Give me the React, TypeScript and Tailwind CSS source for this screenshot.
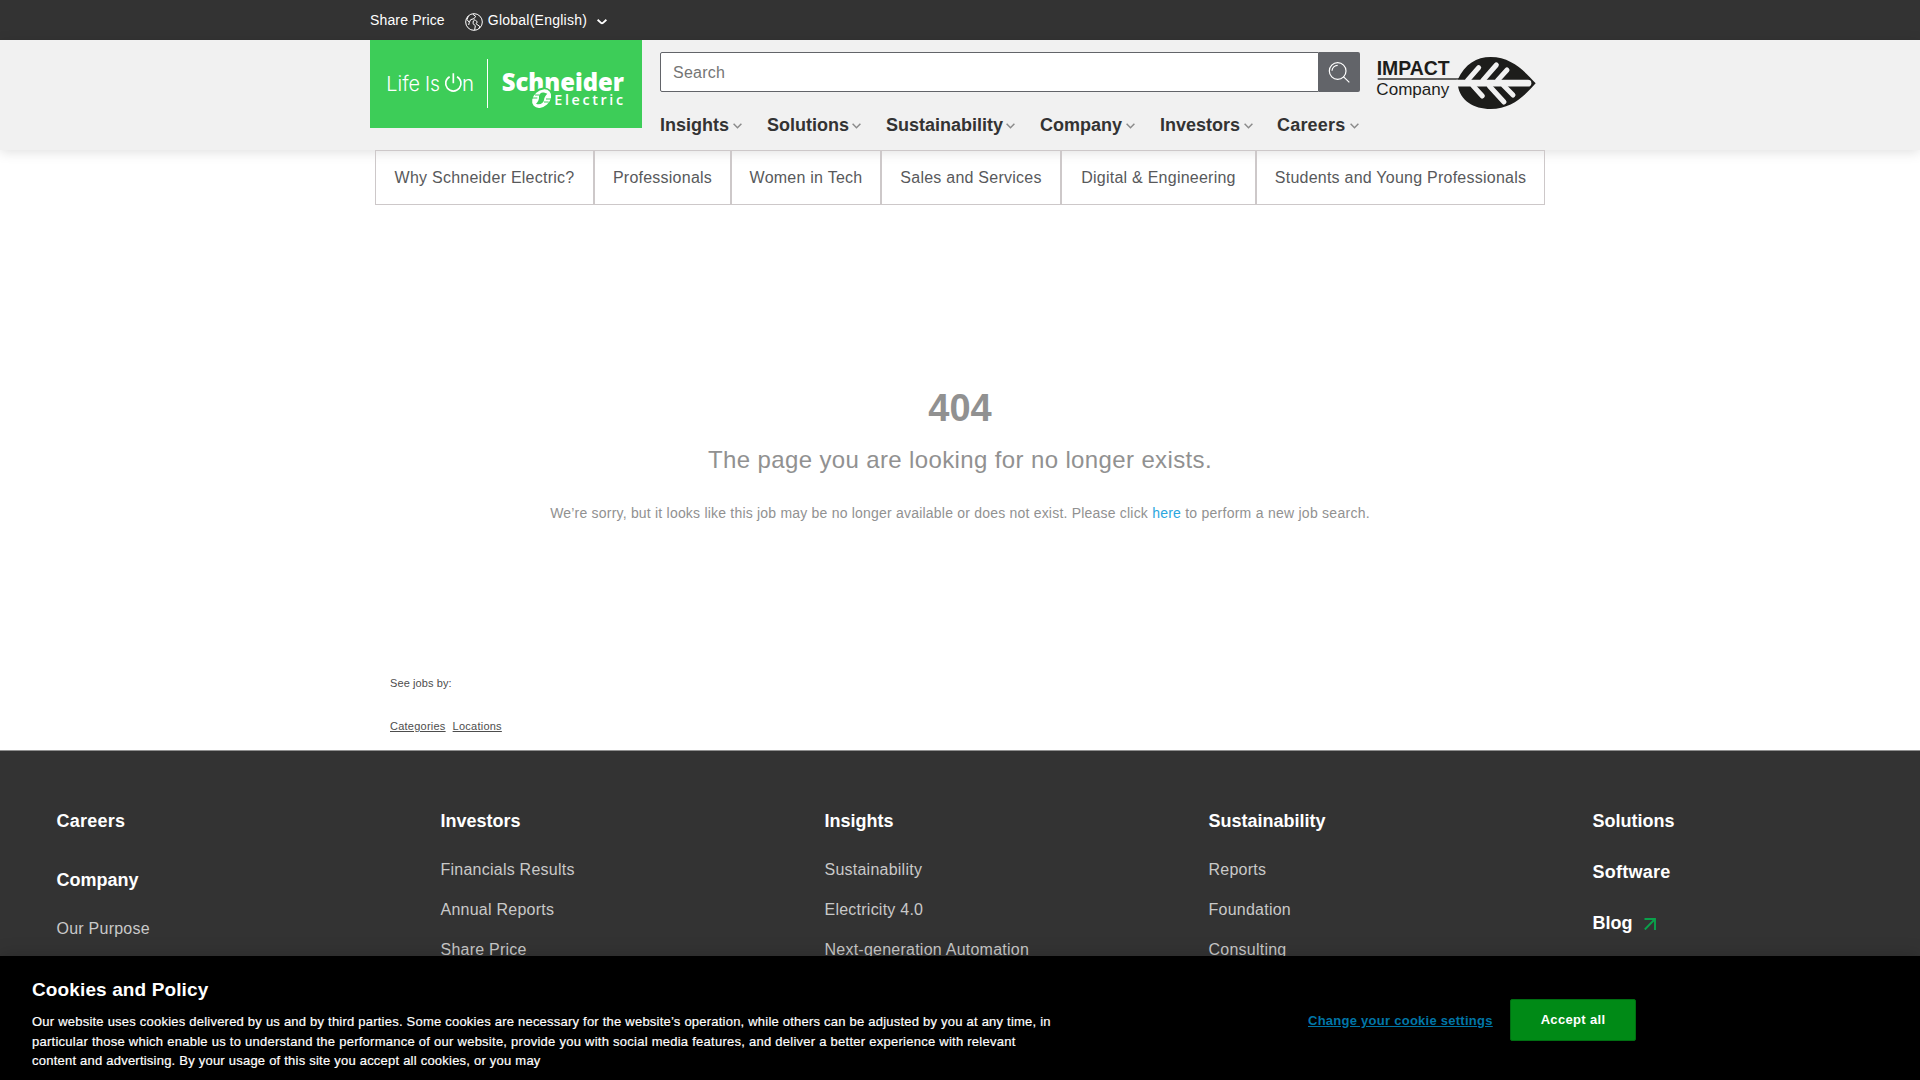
const mainNav = [
  { label: 'Insights', box: 'w-[107px]', gap: 'ml-[4px]' },
  { label: 'Solutions', box: 'w-[119px]', gap: 'ml-[3px]' },
  { label: 'Sustainability', box: 'w-[154px]', gap: 'ml-[3px]' },
  { label: 'Company', box: 'w-[120px]', gap: 'ml-[4px]' },
  { label: 'Investors', box: 'w-[117px]', gap: 'ml-[4px]' },
  { label: 'Careers', box: 'w-[90px] tracking-[0.2px]', gap: 'ml-[5px]' },
];

const subNav = [
  { label: 'Why Schneider Electric?', box: 'w-[219px]' },
  { label: 'Professionals', box: 'w-[137px]' },
  { label: 'Women in Tech', box: 'w-[150px]' },
  { label: 'Sales and Services', box: 'w-[180px]' },
  { label: 'Digital & Engineering', box: 'w-[195px]' },
  { label: 'Students and Young Professionals', box: 'w-[289px]' },
];

const footerColumns = [
  { title: 'Investors', links: ['Financials Results', 'Annual Reports', 'Share Price'] },
  { title: 'Insights', links: ['Sustainability', 'Electricity 4.0', 'Next-generation Automation'] },
  { title: 'Sustainability', links: ['Reports', 'Foundation', 'Consulting'] },
];

function Globe() {
  return (
    <svg viewBox="0 0 54 54" className="h-[18px] w-[18px]" fill="none" stroke="#fff" strokeWidth="3" strokeLinejoin="round">
      <circle cx="27" cy="27" r="25" />
      <path d="M10 9 L6 20 L13 28 L17 20 L27 17 L32 10 L24 4 M25 24 L30 20 L37 27 L33 32 L45 41 L41 47 M25 24 L24 32 L31 38 L29 51 M13 28 L11 36" />
    </svg>
  );
}

function Logo() {
  return (
    <svg viewBox="30 120 816 264" className="h-[88px] w-[272px] shrink-0 bg-[#3dcd58] tracking-normal" fill="#fff">
      <g fontFamily="Inter" fontWeight="300" fontSize="61">
        <text x="79" y="272" textLength="101" lengthAdjust="spacingAndGlyphs">Life</text>
        <text x="195" y="272" textLength="45" lengthAdjust="spacingAndGlyphs">Is</text>
        <text x="306" y="272" textLength="36" lengthAdjust="spacingAndGlyphs">n</text>
      </g>
      <path d="M269 230 A23 23 0 1 0 291 230 M280 220 V250" fill="none" stroke="#fff" strokeWidth="5" />
      <rect x="381" y="177" width="3" height="147" />
      <text x="425" y="272" fontFamily="Open Sans" fontWeight="800" fontSize="75" textLength="367" lengthAdjust="spacingAndGlyphs">Schneider</text>
      <text x="583" y="314" fontFamily="Open Sans" fontWeight="600" fontSize="43" textLength="206" lengthAdjust="spacing">Electric</text>
      <ellipse cx="545" cy="295" rx="36" ry="29" transform="rotate(-42 545 295)" fill="#3dcd58" />
      <ellipse cx="545" cy="296" rx="32" ry="24" transform="rotate(-42 545 296)" />
      <path d="M554 278 C544 275 537 281 537 289 C538 299 534 306 528 311 C539 316 551 310 552 300 C553 291 557 286 562 281 Z" fill="#3dcd58" />
      <path d="M514 294 H532 M525 285 H538 M552 306 H566 M558 297 H576" stroke="#3dcd58" strokeWidth="3.5" />
    </svg>
  );
}

function ImpactLogo() {
  return (
    <svg viewBox="0 0 540 195" className="h-[65px] w-[180px] shrink-0 tracking-normal" fill="#1d1d1b">
      <text x="20" y="74" fontFamily="Liberation Sans" fontWeight="700" fontSize="62" textLength="219" lengthAdjust="spacingAndGlyphs">IMPACT</text>
      <rect x="23" y="85" width="250" height="4" />
      <text x="19" y="136" fontFamily="Liberation Sans" fontSize="50" textLength="219" lengthAdjust="spacingAndGlyphs">Company</text>
      <path d="M263 89 C285 42 320 21 362 21 C425 21 465 65 497 100 C465 136 425 177 362 177 C310 177 270 150 264 108 Z" />
      <g stroke="#f1f1f1" strokeWidth="15" strokeLinecap="round" fill="none">
        <path d="M262 99.500 H474" strokeWidth="20" />
        <path d="M292 92 L326 53 M338 92 L379 45 M382 92 L411 60 M308 106 L337 138 M358 108 L402 156 M400 106 L429 135" />
      </g>
    </svg>
  );
}

function SearchIcon() {
  return (
    <svg viewBox="0 0 66 66" className="h-[22px] w-[22px]" fill="none" stroke="#fff" strokeWidth="3.6">
      <circle cx="29" cy="30" r="25" />
      <path d="M46 47 L64 64 M12 29 A17 17 0 0 1 29 13" />
    </svg>
  );
}

function Chevron() {
  return (
    <svg viewBox="0 0 9 6" className="h-[6px] w-[9px]" fill="none" stroke="#8b8b8b" strokeWidth="1.5">
      <path d="M0.600 0.800 L4.500 4.700 L8.400 0.800" />
    </svg>
  );
}

export default function App() {
  return (
    <div className="relative flex h-[1080px] w-[1920px] flex-col overflow-hidden bg-white font-['Liberation_Sans',sans-serif] tracking-[0.24px]">
      <div className="flex h-10 shrink-0 items-center bg-[#333] pl-[370px] text-sm text-white">
        <span className="tracking-[0.15px]">Share Price</span>
        <div className="ml-[20px] mt-[3px]"><Globe /></div>
        <span className="ml-[5px]">Global(English)</span>
        <svg viewBox="0 0 10 6" className="ml-[10px] mt-[3px] h-[6px] w-[10px]" fill="none" stroke="#fff" strokeWidth="1.9">
          <path d="M0.600 0.800 L4 3.900 Q5 4.800 6 3.900 L9.400 0.800" />
        </svg>
      </div>

      <header className="z-10 flex h-[110px] shrink-0 bg-[#f1f1f1] pl-[370px] shadow-[0_2px_12px_rgba(0,0,0,0.13)]">
        <Logo />
        <div className="ml-[18px] w-[700px] pt-[12px]">
          <div className="flex h-10 w-[700px]">
            <div className="flex flex-1 items-center rounded-l-[2px] border border-[#626469] bg-white pt-[1px] pl-[12px] text-base text-[#757575]">Search</div>
            <div className="flex w-[41px] items-center justify-center rounded-r-[2px] bg-[#626469] pr-[1px] pb-[1px]"><SearchIcon /></div>
          </div>
          <nav className="mt-[20px] flex text-[18px] leading-[26px] font-bold tracking-normal text-[#333]">
            {mainNav.map((n) => (
              <div key={n.label} className={`flex shrink-0 items-center whitespace-nowrap ${n.box}`}>
                {n.label}
                <span className={`mt-[2px] ${n.gap}`}><Chevron /></span>
              </div>
            ))}
          </nav>
        </div>
        <div className="ml-[10px] mt-[10px]"><ImpactLogo /></div>
      </header>

      <nav className="relative z-20 ml-[375px] flex h-[55px] w-[1170px] shrink-0 text-base text-[#58595b]">
        {subNav.map((n) => (
          <div key={n.label} className={`flex items-center justify-center border border-[#cdc8c9] pt-[1px] whitespace-nowrap ${n.box}`}>{n.label}</div>
        ))}
      </nav>

      <main className="flex h-[545px] shrink-0 flex-col items-center text-[#919191]">
        <h1 className="mt-[180px] text-[38px] leading-[46px] font-bold tracking-normal">404</h1>
        <p className="mt-[14px] text-2xl leading-[30px] tracking-[0.371px]">The page you are looking for no longer exists.</p>
        <p className="mt-[28px] text-sm leading-[20px] tracking-[0.207px]">
          We’re sorry, but it looks like this job may be no longer available or does not exist. Please click <a className="text-[#2ba6de]">here</a> <span className="tracking-[0.26px]">to perform a new job search.</span>
        </p>
        <div className="mt-[153px] w-full pl-[390px] text-[11px] leading-[14px] tracking-[0.1px] text-[#4d4d4d]">
          <p>See jobs by:</p>
          <div className="mt-[29px] flex gap-[7px] tracking-[0.24px]">
            <a className="underline">Categories</a>
            <a className="underline">Locations</a>
          </div>
        </div>
      </main>

      <footer className="grid h-[330px] shrink-0 grid-cols-[384px_384px_384px_384px_1fr] border-t border-[#8f8f8f] bg-[#333] pl-[56.5px] text-base text-[#c9c9c9]">
        <div>
          <h2 className="mt-[58px] text-[18px] leading-6 font-bold tracking-[0.25px] text-white">Careers</h2>
          <h2 className="mt-[35px] text-[18px] leading-6 font-bold tracking-normal text-white">Company</h2>
          <p className="mt-[25px] leading-6">Our Purpose</p>
        </div>
        {footerColumns.map((c) => (
          <div key={c.title}>
            <h2 className="mt-[58px] text-[18px] leading-6 font-bold tracking-normal text-white">{c.title}</h2>
            <div className="mt-[25px] flex flex-col gap-4 leading-6">
              {c.links.map((l) => <a key={l}>{l}</a>)}
            </div>
          </div>
        ))}
        <div className="mt-[58px] flex flex-col gap-[27px] text-[18px] leading-6 font-bold tracking-normal text-white">
          <span>Solutions</span>
          <span className="tracking-[0.25px]">Software</span>
          <span className="flex items-center">
            Blog
            <svg viewBox="0 0 12 12" className="mt-[1px] ml-[11px] h-[12px] w-[12px]" fill="none" stroke="#0aa14b" strokeWidth="1.9">
              <path d="M0.500 1 H11 V12 M11 1 L0.800 11.500" />
            </svg>
          </span>
        </div>
      </footer>

      <section className="absolute inset-x-0 bottom-0 z-30 flex h-[124px] bg-black text-white shadow-[0_0_18px_rgba(0,0,0,0.2)]">
        <div className="w-[1276px] pt-[22px] pl-[32px]">
          <h2 className="text-[19px] leading-6 font-bold tracking-[0.12px]">Cookies and Policy</h2>
          <p className="mt-[10px] text-[13px] leading-[19.7px] whitespace-nowrap tracking-[0.222px] [-webkit-text-stroke:0.2px_white]">
            Our website uses cookies delivered by us and by third parties. Some cookies are necessary for the website’s operation, while others can be adjusted by you at any time, in<br />
            <span className="tracking-[0.256px]">particular those which enable us to understand the performance of our website, provide you with social media features, and deliver a better experience with relevant</span><br />
            <span className="tracking-[0.225px]">content and advertising. By your usage of this site you accept all cookies, or you may</span>
          </p>
        </div>
        <div className="mt-[43px] ml-[32px] flex h-[42px] items-center text-[13px] font-bold">
          <a className="w-[202px] pt-[1px] text-[#0076a8] underline tracking-[0.26px]">Change your cookie settings</a>
          <button className="h-[42px] w-[126px] rounded-[2px] border border-[#006e12] bg-[#008a16] tracking-[0.33px]">Accept all</button>
        </div>
      </section>
    </div>
  );
}
